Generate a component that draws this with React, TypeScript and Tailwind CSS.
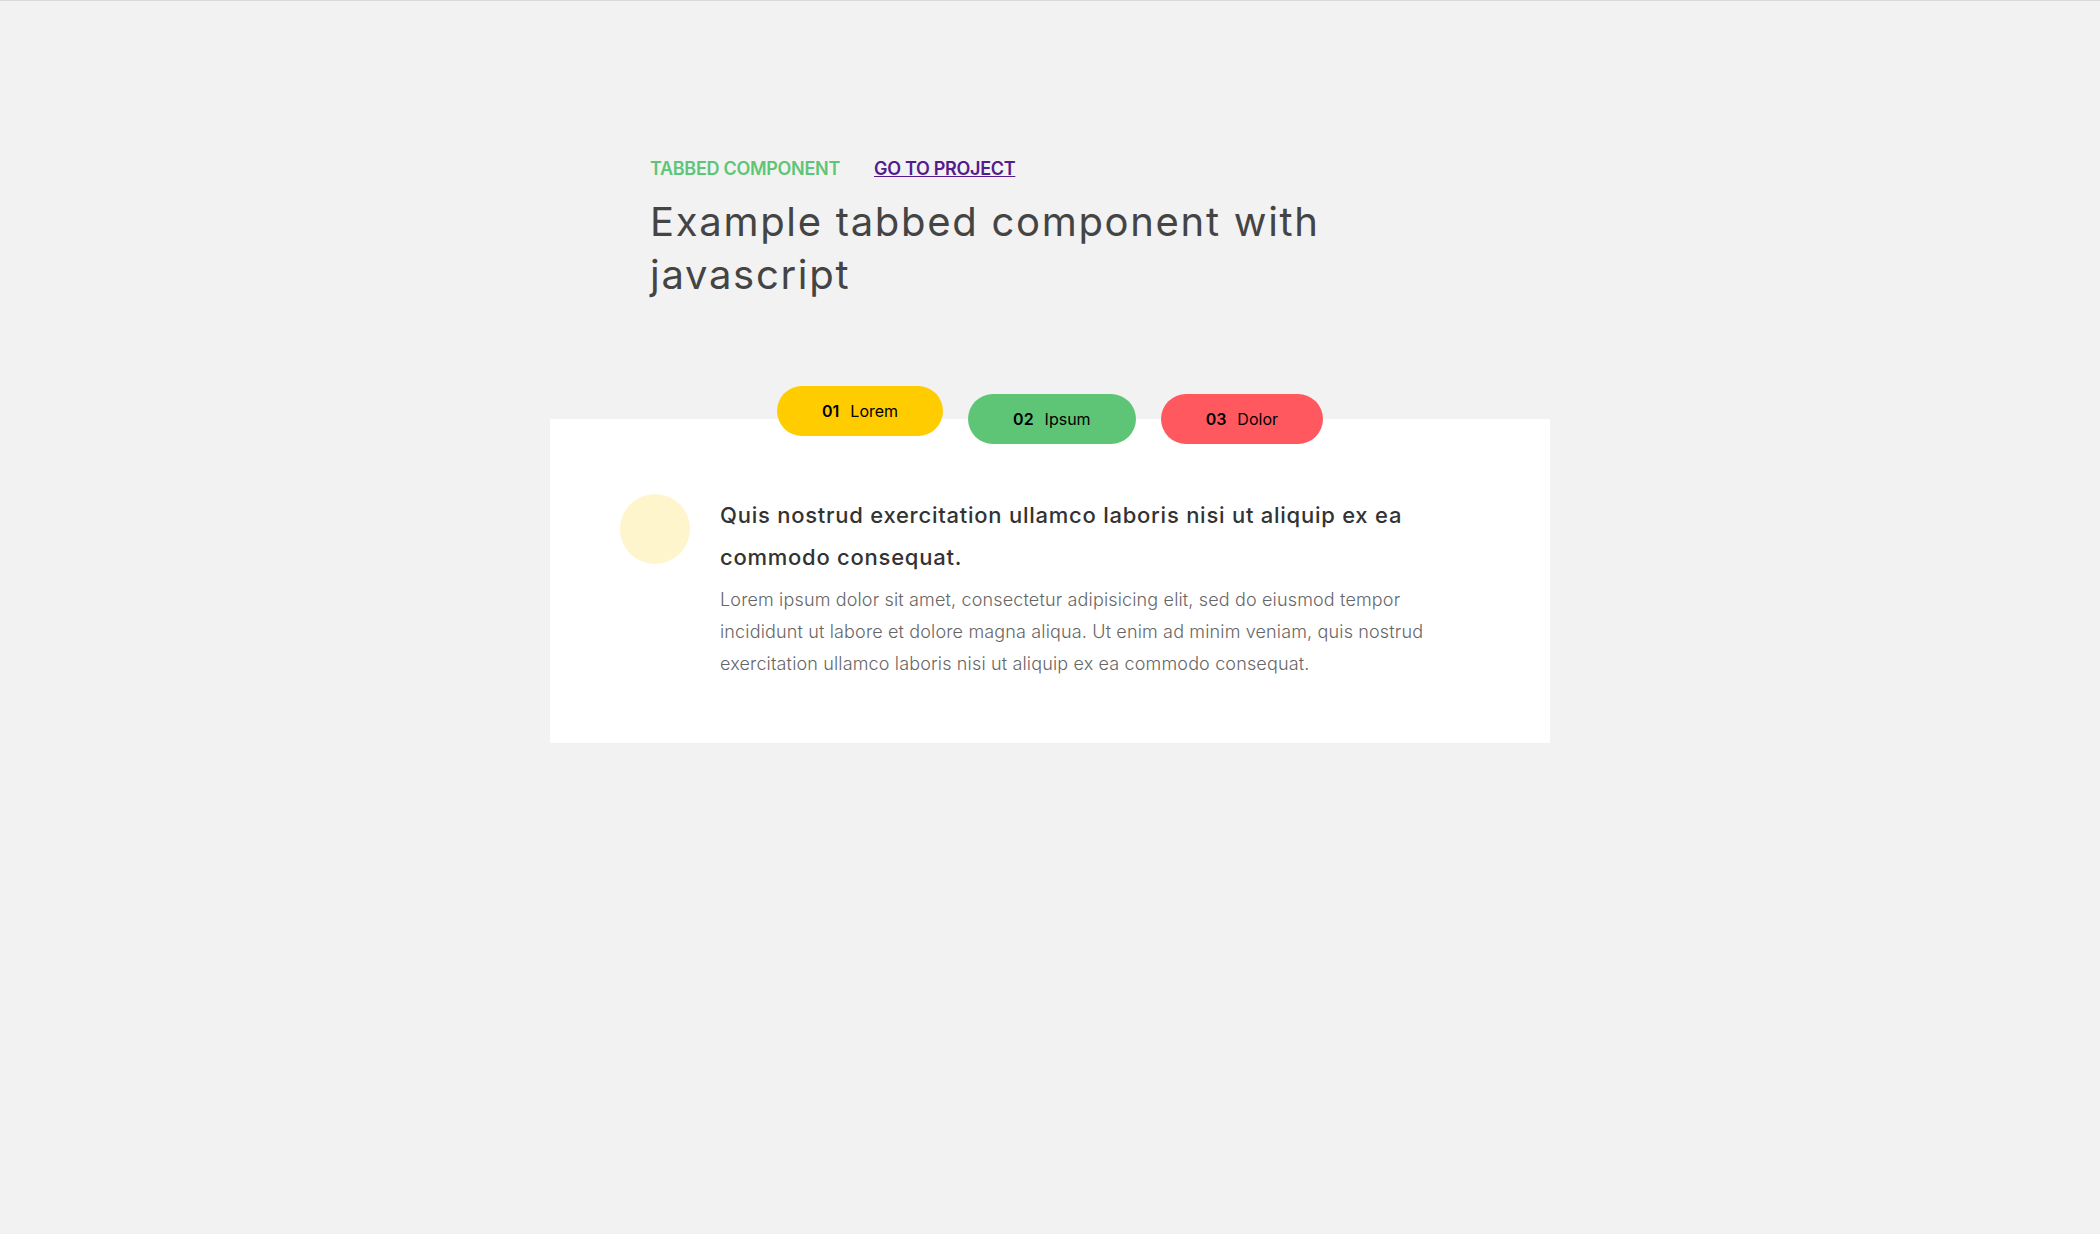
const tabs = [
  { num: "01", label: "Lorem", color: "bg-[#ffcc00]", active: true },
  { num: "02", label: "Ipsum", color: "bg-[#5ec576]", active: false },
  { num: "03", label: "Dolor", color: "bg-[#ff585f]", active: false },
];

export default function App() {
  return (
    <div className="min-h-screen bg-[#f2f2f2] border-t border-[#d9d9d9] font-['Inter','Noto_Sans',sans-serif] pt-[154px]">
      <header className="max-w-[800px] mx-auto">
        <div className="flex gap-[34px] text-[18px] leading-[27px] font-semibold uppercase tracking-[-0.3px]">
          <span className="text-[#5ec576]">Tabbed component</span>
          <a href="#" className="text-[#551a8b] underline">Go to project</a>
        </div>
        <h1 className="mt-[13px] text-[40px] leading-[53px] font-normal tracking-[1.7px] text-[#444]">
          Example tabbed component with javascript
        </h1>
      </header>

      <main className="max-w-[1000px] mx-auto mt-[85px]">
        <div className="relative z-10 flex justify-center items-start gap-[25px]">
          {tabs.map((tab) => (
            <button
              key={tab.num}
              className={`${tab.color} ${tab.active ? "mt-0" : "mt-[8px]"} h-[50px] px-[45px] rounded-full text-[16px] text-black flex items-center gap-[11px]`}
            >
              <span className="font-semibold">{tab.num}</span>
              <span className="font-normal">{tab.label}</span>
            </button>
          ))}
        </div>

        <section className="-mt-[25px] bg-white pl-[70px] pr-[100px] pt-[75px] pb-[63px] flex items-start gap-[30px]">
          <div className="w-[70px] h-[70px] rounded-full bg-[#fff5cc] shrink-0" />
          <div>
            <h2 className="text-[22px] leading-[42px] font-medium tracking-[0.75px] text-[#333]">
              Quis nostrud exercitation ullamco laboris nisi ut aliquip ex ea commodo consequat.
            </h2>
            <p className="mt-[6px] text-[18px] leading-[32px] font-light tracking-[0.15px] text-[#666]">
              Lorem ipsum dolor sit amet, consectetur adipisicing elit, sed do eiusmod tempor incididunt ut labore et dolore magna aliqua. Ut enim ad minim veniam, quis nostrud exercitation ullamco laboris nisi ut aliquip ex ea commodo consequat.
            </p>
          </div>
        </section>
      </main>
    </div>
  );
}
